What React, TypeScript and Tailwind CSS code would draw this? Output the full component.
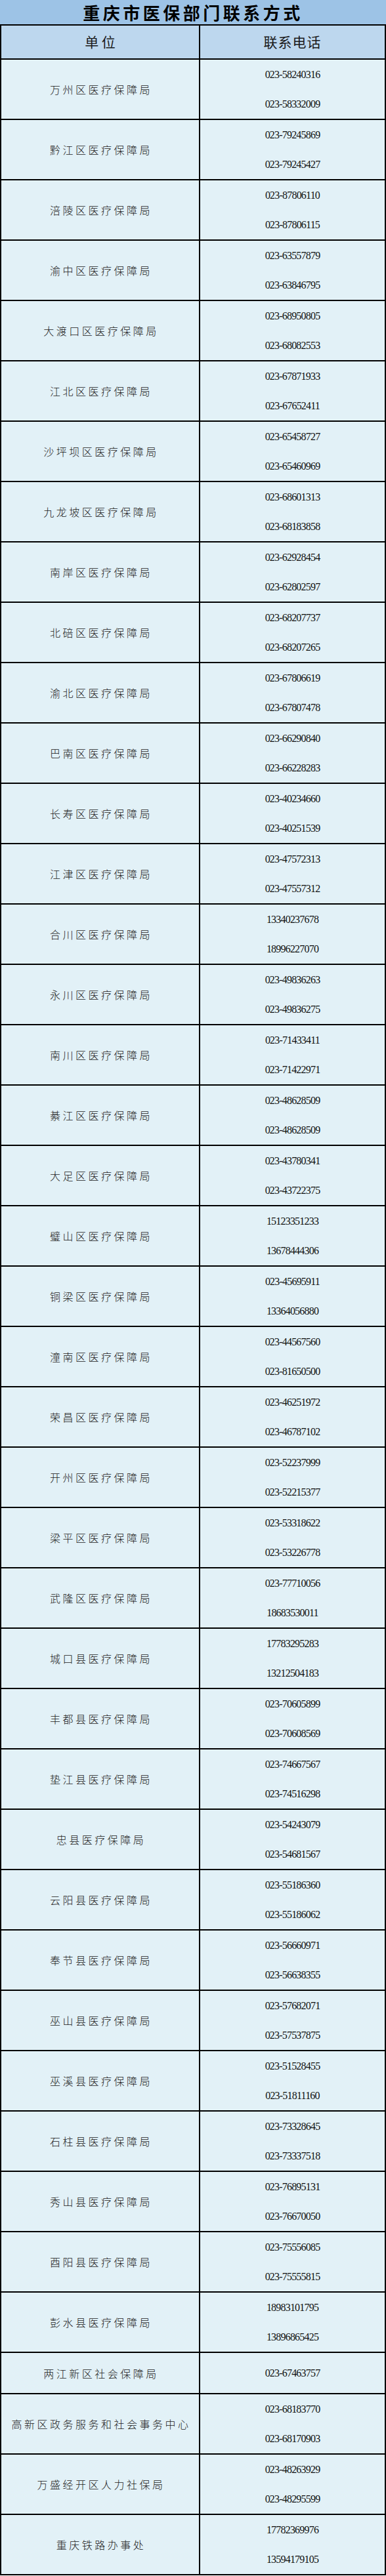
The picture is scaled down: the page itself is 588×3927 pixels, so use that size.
const ROWS: { name: string; phones: string[] }[] = [
  { name: "万州区医疗保障局", phones: ["023-58240316", "023-58332009"] },
  { name: "黔江区医疗保障局", phones: ["023-79245869", "023-79245427"] },
  { name: "涪陵区医疗保障局", phones: ["023-87806110", "023-87806115"] },
  { name: "渝中区医疗保障局", phones: ["023-63557879", "023-63846795"] },
  { name: "大渡口区医疗保障局", phones: ["023-68950805", "023-68082553"] },
  { name: "江北区医疗保障局", phones: ["023-67871933", "023-67652411"] },
  { name: "沙坪坝区医疗保障局", phones: ["023-65458727", "023-65460969"] },
  { name: "九龙坡区医疗保障局", phones: ["023-68601313", "023-68183858"] },
  { name: "南岸区医疗保障局", phones: ["023-62928454", "023-62802597"] },
  { name: "北碚区医疗保障局", phones: ["023-68207737", "023-68207265"] },
  { name: "渝北区医疗保障局", phones: ["023-67806619", "023-67807478"] },
  { name: "巴南区医疗保障局", phones: ["023-66290840", "023-66228283"] },
  { name: "长寿区医疗保障局", phones: ["023-40234660", "023-40251539"] },
  { name: "江津区医疗保障局", phones: ["023-47572313", "023-47557312"] },
  { name: "合川区医疗保障局", phones: ["13340237678", "18996227070"] },
  { name: "永川区医疗保障局", phones: ["023-49836263", "023-49836275"] },
  { name: "南川区医疗保障局", phones: ["023-71433411", "023-71422971"] },
  { name: "綦江区医疗保障局", phones: ["023-48628509", "023-48628509"] },
  { name: "大足区医疗保障局", phones: ["023-43780341", "023-43722375"] },
  { name: "璧山区医疗保障局", phones: ["15123351233", "13678444306"] },
  { name: "铜梁区医疗保障局", phones: ["023-45695911", "13364056880"] },
  { name: "潼南区医疗保障局", phones: ["023-44567560", "023-81650500"] },
  { name: "荣昌区医疗保障局", phones: ["023-46251972", "023-46787102"] },
  { name: "开州区医疗保障局", phones: ["023-52237999", "023-52215377"] },
  { name: "梁平区医疗保障局", phones: ["023-53318622", "023-53226778"] },
  { name: "武隆区医疗保障局", phones: ["023-77710056", "18683530011"] },
  { name: "城口县医疗保障局", phones: ["17783295283", "13212504183"] },
  { name: "丰都县医疗保障局", phones: ["023-70605899", "023-70608569"] },
  { name: "垫江县医疗保障局", phones: ["023-74667567", "023-74516298"] },
  { name: "忠县医疗保障局", phones: ["023-54243079", "023-54681567"] },
  { name: "云阳县医疗保障局", phones: ["023-55186360", "023-55186062"] },
  { name: "奉节县医疗保障局", phones: ["023-56660971", "023-56638355"] },
  { name: "巫山县医疗保障局", phones: ["023-57682071", "023-57537875"] },
  { name: "巫溪县医疗保障局", phones: ["023-51528455", "023-51811160"] },
  { name: "石柱县医疗保障局", phones: ["023-73328645", "023-73337518"] },
  { name: "秀山县医疗保障局", phones: ["023-76895131", "023-76670050"] },
  { name: "酉阳县医疗保障局", phones: ["023-75556085", "023-75555815"] },
  { name: "彭水县医疗保障局", phones: ["18983101795", "13896865425"] },
  { name: "两江新区社会保障局", phones: ["023-67463757"] },
  { name: "高新区政务服务和社会事务中心", phones: ["023-68183770", "023-68170903"] },
  { name: "万盛经开区人力社保局", phones: ["023-48263929", "023-48295599"] },
  { name: "重庆铁路办事处", phones: ["17782369976", "13594179105"] },
];

const CJK = "font-['Noto_Sans_CJK_SC',sans-serif]";
const SERIF = "font-['Liberation_Serif','Times_New_Roman',serif]";

export default function App() {
  return (
    <div className="w-[588px] bg-white">
      <div
        className={`h-[37px] bg-[#9dc3e6] flex items-center justify-center ${CJK} text-[26px] font-bold tracking-[4.5px] text-black leading-none`}
      >
        重庆市医保部门联系方式
      </div>

      <div className="border-x-2 border-b-2 border-black">
        <div className="grid grid-cols-[301px_1fr] h-[52px] border-t-2 border-black bg-[#bdd7ee]">
          <div className={`flex items-center justify-center ${CJK} text-[21px] text-[#1a1a1a]`}>
            单 位
          </div>
          <div
            className={`flex items-center justify-center border-l-2 border-black ${CJK} text-[21px] tracking-[1px] text-[#1a1a1a]`}
          >
            联系电话
          </div>
        </div>

        {ROWS.map((row) => (
          <div
            key={row.name}
            className={`grid grid-cols-[301px_1fr] border-t-2 border-black bg-[#e2f1f7] ${
              row.phones.length > 1 ? "h-[92px]" : "h-[63px]"
            }`}
          >
            <div
              className={`flex items-center justify-center pl-[3px] ${CJK} font-light text-[16px] tracking-[3.5px] text-[#222]`}
            >
              {row.name}
            </div>
            <div className="flex flex-col items-center justify-center border-l-2 border-black">
              {row.phones.map((p, i) => (
                <div
                  key={i}
                  className={`h-[45px] flex items-center ${SERIF} text-[16px] tracking-[-0.8px] text-[#111]`}
                >
                  {p}
                </div>
              ))}
            </div>
          </div>
        ))}
      </div>
    </div>
  );
}
